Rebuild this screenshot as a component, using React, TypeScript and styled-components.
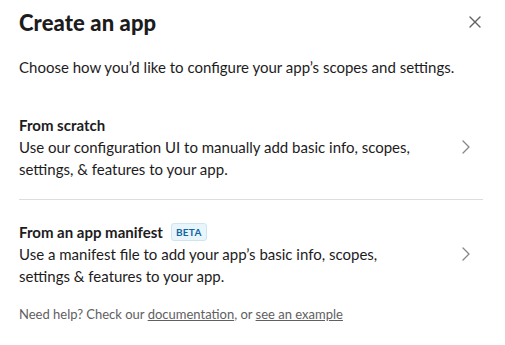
import React from "react";
import styled, {createGlobalStyle} from "styled-components";

const GlobalStyle = createGlobalStyle`
  body {
    margin: 0;
    background: #fff;
    font-family: Lato, "Noto Sans", sans-serif;
    color: #1d1c1d;
  }
`

const Modal = styled.div`
  width: 505px;
  height: 345px;
  box-sizing: border-box;
  padding: 0 22px 0 19px;
  display: flex;
  flex-direction: column;
`

const Header = styled.div`
  display: flex;
  align-items: center;
  justify-content: space-between;
  height: 44px;
`

const Title = styled.h1`
  margin: 0;
  font-size: 22px;
  font-weight: 900;
  letter-spacing: 0.1px;
`

const CloseButton = styled.button`
  border: none;
  background: none;
  padding: 0;
  width: 20px;
  height: 20px;
  margin-right: -2px;
  display: flex;
  align-items: center;
  justify-content: center;
  color: #616061;
  cursor: pointer;
`

const Intro = styled.p`
  margin: 12px 0 0;
  font-size: 15px;
  line-height: 22px;
`

const Option = styled.div<{ $first?: boolean }>`
  display: flex;
  align-items: center;
  padding: ${p => p.$first ? "36px 0 19px" : "21px 0 8px"};
  border-bottom: ${p => p.$first ? "1px solid #dddddd" : "none"};
`

const OptionText = styled.div`
  flex: 1;
  font-size: 15px;
  line-height: 22px;
`

const OptionTitle = styled.div`
  font-weight: 700;
  display: flex;
  align-items: center;
  gap: 8px;
`

const Badge = styled.span`
  font-size: 10px;
  font-weight: 700;
  letter-spacing: 0.3px;
  line-height: 14px;
  padding: 1px 4px;
  border-radius: 3px;
  color: #1264a3;
  background: #e8f5fa;
  border: 1px solid #cfe6f2;
`

const Chevron = styled.div`
  width: 20px;
  display: flex;
  justify-content: center;
  color: #868686;
  margin-right: 7px;
`

const Footer = styled.p`
  margin: 10px 0 0;
  font-size: 13px;
  line-height: 18px;
  color: #616061;

  a {
    color: #616061;
    text-decoration: underline;
  }
`

function ChevronIcon() {
    return (
        <svg width="8" height="14" viewBox="0 0 8 14" fill="none">
            <path d="M1 1l6 6-6 6" stroke="currentColor" strokeWidth="1.3" strokeLinecap="round" strokeLinejoin="round"/>
        </svg>
    );
}

function App() {
    return (
        <>
            <GlobalStyle/>
            <Modal>
                <Header>
                    <Title>Create an app</Title>
                    <CloseButton aria-label="Close">
                        <svg width="12" height="12" viewBox="0 0 12 12">
                            <path d="M1 1l10 10M11 1L1 11" stroke="currentColor" strokeWidth="1.4" strokeLinecap="round"/>
                        </svg>
                    </CloseButton>
                </Header>
                <Intro>Choose how you’d like to configure your app’s scopes and settings.</Intro>
                <Option $first>
                    <OptionText>
                        <OptionTitle>From scratch</OptionTitle>
                        Use our configuration UI to manually add basic info, scopes,<br/>
                        settings, &amp; features to your app.
                    </OptionText>
                    <Chevron><ChevronIcon/></Chevron>
                </Option>
                <Option>
                    <OptionText>
                        <OptionTitle>From an app manifest <Badge>BETA</Badge></OptionTitle>
                        Use a manifest file to add your app’s basic info, scopes,<br/>
                        settings &amp; features to your app.
                    </OptionText>
                    <Chevron><ChevronIcon/></Chevron>
                </Option>
                <Footer>
                    Need help? Check our <a href="#">documentation</a>, or <a href="#">see an example</a>
                </Footer>
            </Modal>
        </>
    );
}

export default App;
